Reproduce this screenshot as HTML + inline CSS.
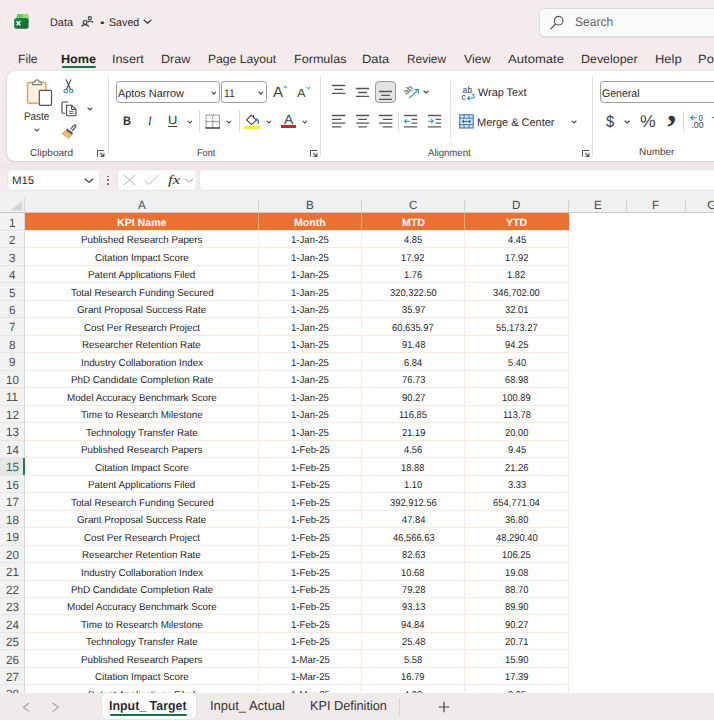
<!DOCTYPE html>
<html lang="en"><head><meta charset="utf-8"><title>Data - Excel</title>
<style>
html,body{margin:0;padding:0;}
body{width:714px;height:720px;overflow:hidden;background:#f4ecec;position:relative;font-family:"Liberation Sans",sans-serif;}
#app{position:absolute;left:0;top:0;width:714px;height:720px;overflow:hidden;background:#f4ecec;}
.b{position:absolute;display:block;}
.t{position:absolute;display:block;white-space:pre;line-height:1;text-rendering:geometricPrecision;transform-origin:0 0;font-family:"Liberation Sans",sans-serif;}
</style></head><body><div id="app">
<svg class="b" style="left:14.00px;top:14.00px;overflow:visible;" width="14.80" height="15.00" viewBox="0 0 14.80 15.00" fill="none">
<defs><linearGradient id="xg" x1="0" y1="0" x2="1" y2="1"><stop offset="0" stop-color="#23904a"/><stop offset="1" stop-color="#14602f"/></linearGradient></defs>
<rect x="2.6" y="0.1" width="12" height="9" rx="2.2" fill="#63c766"/>
<path d="M8.6 0.1 H12.4 a2.2 2.2 0 0 1 2.2 2.2 V5.2 H8.6 Z" fill="#9bdc74"/>
<rect x="0.1" y="3.9" width="14.5" height="10.9" rx="2.3" fill="url(#xg)"/>
<path d="M2.6 7.2 L6.4 11.4 M6.4 7.2 L2.6 11.4" stroke="#fff" stroke-width="1.35"/>
</svg>
<span class="t" style="left:50.34px;top:18px;font-size:11px;color:#2b2b2b;transform:scaleX(0.9877);">Data</span>
<svg class="b" style="left:81.00px;top:16.00px;overflow:visible;" width="12.00" height="11.00" viewBox="0 0 12.00 11.00" fill="none">
<circle cx="4.1" cy="6.3" r="1.9" stroke="#333" stroke-width="1.05"/>
<path d="M0.6 10.7 C1.2 7.9 7 7.9 7.6 10.7" stroke="#333" stroke-width="1.05"/>
<circle cx="8.8" cy="2.2" r="1.6" stroke="#333" stroke-width="1.05"/>
<path d="M7.2 6.6 V5.2 H10.4 C11.2 5.2 11.5 5.9 11.5 6.9" stroke="#333" stroke-width="1.05"/>
</svg>
<span class="t" style="left:100.11px;top:19px;font-size:10px;color:#333;transform:scaleX(1.3091);">•</span>
<span class="t" style="left:109.02px;top:18px;font-size:11px;color:#2b2b2b;transform:scaleX(0.9700);">Saved</span>
<svg class="b" style="left:142.84px;top:19.39px;overflow:visible;" width="9.12" height="5.23" viewBox="0 0 9.12 5.23" fill="none"><path d="M1 1 L4.56 4.23 L8.12 1" stroke="#333" stroke-width="1.1" stroke-linecap="round" stroke-linejoin="round"/></svg>
<div class="b" style="left:538.50px;top:7.60px;width:191.50px;height:29.10px;background:#fbfafa;border:1px solid #e0dada;border-radius:5px;box-sizing:border-box;box-shadow:0 1px 1px rgba(0,0,0,.06);"></div>
<svg class="b" style="left:550.00px;top:14.50px;overflow:visible;" width="14.00" height="14.50" viewBox="0 0 14.00 14.50" fill="none"><circle cx="8.6" cy="5.7" r="4.3" stroke="#555" stroke-width="1.1"/><path d="M5.5 9 L0.8 13.8" stroke="#555" stroke-width="1.2" stroke-linecap="round"/></svg>
<span class="t" style="left:575.10px;top:16px;font-size:12.5px;color:#666;transform:scaleX(0.9626);">Search</span>
<span class="t" style="left:17.99px;top:53px;font-size:12px;color:#333;transform:scaleX(1.0141);">File</span>
<span class="t" style="left:112.11px;top:53px;font-size:12px;color:#333;transform:scaleX(1.0574);">Insert</span>
<span class="t" style="left:161.45px;top:53px;font-size:12px;color:#333;transform:scaleX(1.0507);">Draw</span>
<span class="t" style="left:207.99px;top:53px;font-size:12px;color:#333;transform:scaleX(1.0113);">Page Layout</span>
<span class="t" style="left:293.95px;top:53px;font-size:12px;color:#333;transform:scaleX(1.0488);">Formulas</span>
<span class="t" style="left:361.93px;top:53px;font-size:12px;color:#333;transform:scaleX(1.0722);">Data</span>
<span class="t" style="left:407.01px;top:53px;font-size:12px;color:#333;transform:scaleX(0.9902);">Review</span>
<span class="t" style="left:464.37px;top:53px;font-size:12px;color:#333;transform:scaleX(1.0291);">View</span>
<span class="t" style="left:508.00px;top:53px;font-size:12px;color:#333;transform:scaleX(1.0909);">Automate</span>
<span class="t" style="left:580.96px;top:53px;font-size:12px;color:#333;transform:scaleX(1.0355);">Developer</span>
<span class="t" style="left:654.92px;top:53px;font-size:12px;color:#333;transform:scaleX(1.0811);">Help</span>
<span class="t" style="left:698.22px;top:53px;font-size:12px;color:#333;transform:scaleX(1.0819);">Po</span>
<span class="t" style="left:60.71px;top:53px;font-size:12px;color:#1f1f1f;transform:scaleX(1.0521);font-weight:700;">Home</span>
<div class="b" style="left:61.50px;top:65.60px;width:34.10px;height:2.60px;background:#18724a;border-radius:1.3px;"></div>
<div class="b" style="left:7.00px;top:71.30px;width:733.00px;height:90.00px;background:#ffffff;border-radius:8px;box-shadow:0 1px 3px rgba(90,60,60,.2),0 0 1px rgba(90,60,60,.18);"></div>
<div class="b" style="left:108.00px;top:76.00px;width:1.00px;height:78.00px;background:#e1dfdf;"></div>
<div class="b" style="left:320.40px;top:76.00px;width:1.00px;height:79.70px;background:#e1dfdf;"></div>
<div class="b" style="left:592.40px;top:76.00px;width:1.00px;height:80.50px;background:#e1dfdf;"></div>
<div class="b" style="left:199.30px;top:110.30px;width:1.00px;height:21.70px;background:#dcdcdc;"></div>
<div class="b" style="left:238.80px;top:110.30px;width:1.00px;height:21.70px;background:#dcdcdc;"></div>
<div class="b" style="left:398.20px;top:110.80px;width:1.00px;height:20.40px;background:#dcdcdc;"></div>
<div class="b" style="left:683.30px;top:110.60px;width:1.00px;height:20.80px;background:#dcdcdc;"></div>
<div class="b" style="left:450.20px;top:79.80px;width:1.00px;height:57.80px;background:#e1dfdf;"></div>
<svg class="b" style="left:26.00px;top:79.00px;overflow:visible;" width="27.00" height="28.00" viewBox="0 0 27.00 28.00" fill="none">
<path d="M3.2 3.6 H18.4 a1.6 1.6 0 0 1 1.6 1.6 V22.6 a1.6 1.6 0 0 1 -1.6 1.6 H3.2 a1.6 1.6 0 0 1 -1.6 -1.6 V5.2 a1.6 1.6 0 0 1 1.6 -1.6 Z" fill="#fdf2e4"/>
<path d="M7 3.6 H3.2 a1.6 1.6 0 0 0 -1.6 1.6 V22.6 a1.6 1.6 0 0 0 1.6 1.6 H12.4" stroke="#e9a04a" stroke-width="1.5"/>
<path d="M15 3.6 H18.4 a1.6 1.6 0 0 1 1.6 1.6 V10.4" stroke="#e9a04a" stroke-width="1.5"/>
<path d="M6.6 5.6 V3.9 a1 1 0 0 1 1 -1 H9 a2 2 0 0 1 4 0 H14.4 a1 1 0 0 1 1 1 V5.6 Z" stroke="#777" stroke-width="1.1" fill="#fff"/>
<rect x="13.3" y="11.3" width="12.2" height="15" rx="1" fill="#fff" stroke="#555" stroke-width="1.2"/>
</svg>
<span class="t" style="left:24.41px;top:112px;font-size:11px;color:#333;transform:scaleX(0.9009);">Paste</span>
<svg class="b" style="left:34.04px;top:128.38px;overflow:visible;" width="5.92" height="4.23" viewBox="0 0 5.92 4.23" fill="none"><path d="M1 1 L2.96 3.23 L4.92 1" stroke="#444" stroke-width="1.1" stroke-linecap="round" stroke-linejoin="round"/></svg>
<svg class="b" style="left:63.00px;top:78.50px;overflow:visible;" width="11.00" height="15.00" viewBox="0 0 11.00 15.00" fill="none">
<path d="M3.2 0.8 L7.4 10.2 M7.8 0.8 L3.6 10.2" stroke="#444" stroke-width="1.05" stroke-linecap="round"/>
<circle cx="2.7" cy="12" r="1.7" stroke="#2f7fc1" stroke-width="1.05"/>
<circle cx="8.3" cy="12" r="1.7" stroke="#2f7fc1" stroke-width="1.05"/>
</svg>
<svg class="b" style="left:60.50px;top:100.50px;overflow:visible;" width="16.50" height="15.50" viewBox="0 0 16.50 15.50" fill="none">
<path d="M4.3 12.2 H2 a1 1 0 0 1 -1 -1 V2 a1 1 0 0 1 1 -1 H7.2" stroke="#444" stroke-width="1.1"/>
<path d="M5.6 4.3 H10.8 L14.9 8.2 V13.7 a1 1 0 0 1 -1 1 H6.6 a1 1 0 0 1 -1 -1 Z" stroke="#444" stroke-width="1.1" fill="#fff"/>
<path d="M10.6 4.5 V8.4 H14.7" stroke="#444" stroke-width="1"/>
<path d="M8 10.3 H12.6 M8 12.3 H12.6" stroke="#555" stroke-width=".9"/>
</svg>
<svg class="b" style="left:86.64px;top:106.98px;overflow:visible;" width="5.92" height="3.93" viewBox="0 0 5.92 3.93" fill="none"><path d="M1 1 L2.96 2.93 L4.92 1" stroke="#444" stroke-width="1.1" stroke-linecap="round" stroke-linejoin="round"/></svg>
<svg class="b" style="left:61.00px;top:124.00px;overflow:visible;" width="16.00" height="15.00" viewBox="0 0 16.00 15.00" fill="none">
<path d="M9.4 5.2 L13.2 1.2 a1.1 1.1 0 0 1 1.6 1.5 L11.3 6.9" stroke="#444" stroke-width="1.1" fill="#fff"/>
<path d="M6.2 4.6 L12.2 9 L10.9 10.8 L4.9 6.4 Z" fill="#555"/>
<path d="M4.3 6.9 L10.4 11.4 L7.6 14.3 L1 9.6 Z" fill="#f3bd72" stroke="#e8973a" stroke-width=".9" stroke-linejoin="round"/>
</svg>
<span class="t" style="left:30.30px;top:149px;font-size:10px;color:#444;transform:scaleX(1.0042);">Clipboard</span>
<svg class="b" style="left:97.30px;top:149.50px;overflow:visible;" width="7.70" height="7.20" viewBox="0 0 7.70 7.20" fill="none"><path d="M7.20 0.5 H0.5 V6.70" stroke="#555" stroke-width="1"/><path d="M3 3 L6.90 6.40 M6.90 3.00 V6.40 H3.50" stroke="#555" stroke-width="1.1"/></svg>
<div class="b" style="left:115.70px;top:81.30px;width:104.00px;height:21.70px;background:#fff;border:1px solid #9c9c9c;border-radius:3.5px;box-sizing:border-box;"></div>
<span class="t" style="left:118.40px;top:89px;font-size:11px;color:#2b2b2b;transform:scaleX(0.9873);">Aptos Narrow</span>
<svg class="b" style="left:211.44px;top:90.69px;overflow:visible;" width="5.72" height="4.13" viewBox="0 0 5.72 4.13" fill="none"><path d="M1 1 L2.86 3.13 L4.72 1" stroke="#333" stroke-width="1.1" stroke-linecap="round" stroke-linejoin="round"/></svg>
<div class="b" style="left:221.30px;top:81.30px;width:45.60px;height:21.70px;background:#fff;border:1px solid #9c9c9c;border-radius:3.5px;box-sizing:border-box;"></div>
<span class="t" style="left:223.58px;top:89px;font-size:11px;color:#2b2b2b;transform:scaleX(0.9400);">11</span>
<svg class="b" style="left:258.24px;top:90.69px;overflow:visible;" width="5.72" height="4.13" viewBox="0 0 5.72 4.13" fill="none"><path d="M1 1 L2.86 3.13 L4.72 1" stroke="#333" stroke-width="1.1" stroke-linecap="round" stroke-linejoin="round"/></svg>
<span class="t" style="left:273.00px;top:86px;font-size:14.8px;color:#444;transform:scaleX(1.0256);">A</span>
<svg class="b" style="left:283.00px;top:85.00px;overflow:visible;" width="5.00" height="4.00" viewBox="0 0 5.00 4.00" fill="none"><path d="M0.7 3.2 L2.4 0.9 L4.1 3.2" stroke="#2a8fb5" stroke-width="1"/></svg>
<span class="t" style="left:297.40px;top:88px;font-size:11.8px;color:#444;transform:scaleX(1.0839);">A</span>
<svg class="b" style="left:305.60px;top:85.50px;overflow:visible;" width="5.00" height="4.00" viewBox="0 0 5.00 4.00" fill="none"><path d="M0.7 0.8 L2.4 3.1 L4.1 0.8" stroke="#2a8fb5" stroke-width="1"/></svg>
<span class="t" style="left:122.62px;top:115px;font-size:12.5px;color:#333;transform:scaleX(0.8918);font-weight:700;">B</span>
<span class="t" style="left:147.60px;top:115px;font-size:12.5px;color:#333;transform:scaleX(0.8649);font-style:italic;font-family:'Liberation Serif',serif;">I</span>
<span class="t" style="left:168.06px;top:114px;font-size:12px;color:#333;transform:scaleX(1.0764);">U</span>
<div class="b" style="left:168.40px;top:125.80px;width:8.60px;height:1.10px;background:#444;"></div>
<svg class="b" style="left:187.04px;top:119.59px;overflow:visible;" width="5.72" height="4.03" viewBox="0 0 5.72 4.03" fill="none"><path d="M1 1 L2.86 3.03 L4.72 1" stroke="#444" stroke-width="1.1" stroke-linecap="round" stroke-linejoin="round"/></svg>
<svg class="b" style="left:204.50px;top:113.50px;overflow:visible;" width="15.50" height="15.00" viewBox="0 0 15.50 15.00" fill="none">
<path d="M1 1 H14.5 M1 1 V14 M14.5 1 V14 M7.75 1 V14 M1 7.5 H14.5" stroke="#777" stroke-width="1" stroke-dasharray="1.6 0.7"/>
<path d="M0.5 14 H15" stroke="#333" stroke-width="1.4"/>
</svg>
<svg class="b" style="left:226.04px;top:119.59px;overflow:visible;" width="5.72" height="4.03" viewBox="0 0 5.72 4.03" fill="none"><path d="M1 1 L2.86 3.03 L4.72 1" stroke="#444" stroke-width="1.1" stroke-linecap="round" stroke-linejoin="round"/></svg>
<svg class="b" style="left:243.50px;top:113.50px;overflow:visible;" width="16.50" height="15.50" viewBox="0 0 16.50 15.50" fill="none">
<path d="M7.2 1.2 L12.4 6.2 L7.4 10.6 L2.6 5.8 Z" stroke="#444" stroke-width="1.1" stroke-linejoin="round" fill="#fff"/>
<path d="M9.6 0.9 V4" stroke="#444" stroke-width="1"/>
<path d="M12.4 4.6 C14 5.6 14.6 7.4 14.2 9.6" stroke="#2f7fc1" stroke-width="1.4"/>
<rect x="0.4" y="11.6" width="15.1" height="3.4" fill="#f2ef35"/>
</svg>
<svg class="b" style="left:265.64px;top:119.59px;overflow:visible;" width="5.72" height="4.03" viewBox="0 0 5.72 4.03" fill="none"><path d="M1 1 L2.86 3.03 L4.72 1" stroke="#444" stroke-width="1.1" stroke-linecap="round" stroke-linejoin="round"/></svg>
<span class="t" style="left:284.40px;top:113px;font-size:13.6px;color:#444;transform:scaleX(1.0222);">A</span>
<div class="b" style="left:281.40px;top:125.10px;width:14.60px;height:3.40px;background:#c9242b;"></div>
<svg class="b" style="left:302.44px;top:119.59px;overflow:visible;" width="5.72" height="4.03" viewBox="0 0 5.72 4.03" fill="none"><path d="M1 1 L2.86 3.03 L4.72 1" stroke="#444" stroke-width="1.1" stroke-linecap="round" stroke-linejoin="round"/></svg>
<span class="t" style="left:196.71px;top:149px;font-size:10px;color:#444;transform:scaleX(0.9143);">Font</span>
<svg class="b" style="left:309.60px;top:149.50px;overflow:visible;" width="7.70" height="7.20" viewBox="0 0 7.70 7.20" fill="none"><path d="M7.20 0.5 H0.5 V6.70" stroke="#555" stroke-width="1"/><path d="M3 3 L6.90 6.40 M6.90 3.00 V6.40 H3.50" stroke="#555" stroke-width="1.1"/></svg>
<svg class="b" style="left:332.20px;top:83.80px;overflow:visible;" width="13.30" height="10.80" viewBox="0 0 13.30 10.80" fill="none"><path d="M0.00 1.50 H13.30 M2.20 5.40 H11.10 M0.00 9.30 H13.30 " stroke="#555" stroke-width="1.3"/></svg>
<svg class="b" style="left:355.70px;top:86.50px;overflow:visible;" width="13.10" height="10.90" viewBox="0 0 13.10 10.90" fill="none"><path d="M0.00 1.50 H13.10 M2.20 5.50 H10.90 M0.00 9.40 H13.10 " stroke="#555" stroke-width="1.3"/></svg>
<div class="b" style="left:374.50px;top:81.30px;width:21.70px;height:21.70px;background:#e3e3e3;border:1px solid #9a9a9a;border-radius:4px;box-sizing:border-box;"></div>
<svg class="b" style="left:378.80px;top:89.70px;overflow:visible;" width="13.00" height="10.80" viewBox="0 0 13.00 10.80" fill="none"><path d="M0.00 1.50 H13.00 M2.20 5.40 H10.80 M0.00 9.30 H13.00 " stroke="#555" stroke-width="1.3"/></svg>
<svg class="b" style="left:402.50px;top:83.50px;overflow:visible;" width="16.50" height="16.00" viewBox="0 0 16.50 16.00" fill="none">
<text x="0" y="0" transform="translate(3.5 11.3) rotate(-45)" font-family="Liberation Sans, sans-serif" font-size="8.6" fill="#444">ab</text>
<path d="M6.2 14.4 L15.1 5.8 M11.3 5.6 H15.3 V9.6" stroke="#2a8fb5" stroke-width="1.05"/>
</svg>
<svg class="b" style="left:423.46px;top:90.40px;overflow:visible;" width="6.08" height="3.99" viewBox="0 0 6.08 3.99" fill="none"><path d="M1 1 L3.04 2.99 L5.08 1" stroke="#444" stroke-width="1.15" stroke-linecap="round" stroke-linejoin="round"/></svg>
<svg class="b" style="left:332.20px;top:114.00px;overflow:visible;" width="13.30" height="14.40" viewBox="0 0 13.30 14.40" fill="none"><path d="M0.00 1.50 H13.30 M0.00 5.30 H9.30 M0.00 9.10 H13.30 M0.00 12.90 H9.30 " stroke="#555" stroke-width="1.3"/></svg>
<svg class="b" style="left:355.70px;top:114.00px;overflow:visible;" width="13.10" height="14.40" viewBox="0 0 13.10 14.40" fill="none"><path d="M0.00 1.50 H13.10 M2.20 5.30 H10.90 M0.00 9.10 H13.10 M2.20 12.90 H10.90 " stroke="#555" stroke-width="1.3"/></svg>
<svg class="b" style="left:378.80px;top:114.00px;overflow:visible;" width="13.40" height="14.40" viewBox="0 0 13.40 14.40" fill="none"><path d="M0.00 1.50 H13.40 M4.00 5.30 H13.40 M0.00 9.10 H13.40 M4.00 12.90 H13.40 " stroke="#555" stroke-width="1.3"/></svg>
<svg class="b" style="left:404.30px;top:114.00px;overflow:visible;" width="13.20" height="14.40" viewBox="0 0 13.20 14.40" fill="none"><path d="M0 1.5 H13.20 M0 12.90 H13.20 M7.60 5.30 H13.20 M7.60 9.10 H13.20" stroke="#5c5c5c" stroke-width="1.3"/><path d="M5.6 7.20 H0.6 M2.6 5.20 L0.6 7.20 L2.6 9.20" stroke="#2a8fb5" stroke-width="1.05"/></svg>
<svg class="b" style="left:427.50px;top:114.00px;overflow:visible;" width="13.10" height="14.40" viewBox="0 0 13.10 14.40" fill="none"><path d="M0 1.5 H13.10 M0 12.90 H13.10 M7.50 5.30 H13.10 M7.50 9.10 H13.10" stroke="#5c5c5c" stroke-width="1.3"/><path d="M0.2 7.20 H5.2 M3.2 5.20 L5.2 7.20 L3.2 9.20" stroke="#2a8fb5" stroke-width="1.05"/></svg>
<svg class="b" style="left:461.00px;top:86.00px;overflow:visible;" width="14.50" height="14.00" viewBox="0 0 14.50 14.00" fill="none">
<text x="1.6" y="6.9" font-family="Liberation Sans, sans-serif" font-size="8.8" fill="#444" textLength="9.6" lengthAdjust="spacingAndGlyphs">ab</text>
<text x="0.6" y="13.6" font-family="Liberation Sans, sans-serif" font-size="8.8" fill="#444">c</text>
<path d="M10.6 8.2 C14 8 14.2 12.4 10.8 12.2 H7 M8.8 10.2 L6.6 12.2 L8.8 14.2" stroke="#2a8fb5" stroke-width="1.1"/>
</svg>
<span class="t" style="left:477.80px;top:88px;font-size:11px;color:#2b2b2b;transform:scaleX(0.9857);">Wrap Text</span>
<svg class="b" style="left:459.00px;top:113.60px;overflow:visible;" width="15.00" height="14.80" viewBox="0 0 15.00 14.80" fill="none">
<rect x="0.8" y="0.8" width="13.4" height="13.2" fill="#dbeaf7" stroke="#3a78b5" stroke-width="1.1"/>
<path d="M0.8 4.2 H14.2 M0.8 10.6 H14.2 M5 0.8 V4.2 M10 0.8 V4.2 M5 10.6 V14 M10 10.6 V14" stroke="#3a78b5" stroke-width="1"/>
<path d="M3.2 7.4 H11.8 M5 5.8 L3.2 7.4 L5 9 M10 5.8 L11.8 7.4 L10 9" stroke="#1e5f9f" stroke-width="1"/>
</svg>
<span class="t" style="left:476.93px;top:118px;font-size:11px;color:#2b2b2b;transform:scaleX(0.9984);">Merge &amp; Center</span>
<svg class="b" style="left:571.04px;top:120.19px;overflow:visible;" width="6.12" height="3.83" viewBox="0 0 6.12 3.83" fill="none"><path d="M1 1 L3.06 2.83 L5.12 1" stroke="#444" stroke-width="1.1" stroke-linecap="round" stroke-linejoin="round"/></svg>
<span class="t" style="left:427.60px;top:149px;font-size:10px;color:#444;transform:scaleX(0.9596);">Alignment</span>
<svg class="b" style="left:581.60px;top:149.50px;overflow:visible;" width="7.70" height="7.20" viewBox="0 0 7.70 7.20" fill="none"><path d="M7.20 0.5 H0.5 V6.70" stroke="#555" stroke-width="1"/><path d="M3 3 L6.90 6.40 M6.90 3.00 V6.40 H3.50" stroke="#555" stroke-width="1.1"/></svg>
<div class="b" style="left:600.40px;top:81.30px;width:139.60px;height:21.70px;background:#fff;border:1px solid #9c9c9c;border-radius:3.5px;box-sizing:border-box;"></div>
<span class="t" style="left:601.92px;top:89px;font-size:11px;color:#2b2b2b;transform:scaleX(0.9579);">General</span>
<span class="t" style="left:606.09px;top:114px;font-size:16.5px;color:#444;transform:scaleX(0.8914);">$</span>
<svg class="b" style="left:624.44px;top:119.79px;overflow:visible;" width="6.32" height="4.03" viewBox="0 0 6.32 4.03" fill="none"><path d="M1 1 L3.16 3.03 L5.32 1" stroke="#444" stroke-width="1.1" stroke-linecap="round" stroke-linejoin="round"/></svg>
<span class="t" style="left:639.95px;top:113px;font-size:17px;color:#444;transform:scaleX(1.0378);">%</span>
<span class="t" style="left:667.30px;top:91px;font-size:36px;color:#333;transform:scaleX(1.0000);font-weight:700;font-family:'Liberation Serif',serif;">,</span>
<svg class="b" style="left:689.50px;top:113.80px;overflow:visible;" width="14.50" height="14.60" viewBox="0 0 14.50 14.60" fill="none">
<path d="M6.8 3.8 H0.8 M3.2 1.4 L0.8 3.8 L3.2 6.2" stroke="#2a8fb5" stroke-width="1.1"/>
<text x="8.6" y="7" font-family="Liberation Sans, sans-serif" font-size="8.8" fill="#444" textLength="4.4" lengthAdjust="spacingAndGlyphs">0</text>
<text x="1.4" y="14.4" font-family="Liberation Sans, sans-serif" font-size="8.8" fill="#444" textLength="12.2" lengthAdjust="spacingAndGlyphs">.00</text>
</svg>
<svg class="b" style="left:711.00px;top:113.80px;overflow:visible;" width="5.00" height="14.60" viewBox="0 0 5.00 14.60" fill="none"><path d="M0.8 3.6 H6" stroke="#2a8fb5" stroke-width="1.05"/></svg>
<span class="t" style="left:639.36px;top:148px;font-size:10px;color:#444;transform:scaleX(0.9906);">Number</span>
<div class="b" style="left:0.00px;top:162.00px;width:714.00px;height:7.60px;background:#f0e8e8;"></div>
<div class="b" style="left:7.50px;top:169.60px;width:91.80px;height:20.70px;background:#fff;border-radius:4px;box-shadow:0 0 0 .5px #e3dcdc;"></div>
<span class="t" style="left:11.99px;top:176px;font-size:11px;color:#2b2b2b;transform:scaleX(1.0350);">M15</span>
<svg class="b" style="left:84.44px;top:177.58px;overflow:visible;" width="9.92" height="5.43" viewBox="0 0 9.92 5.43" fill="none"><path d="M1 1 L4.96 4.43 L8.92 1" stroke="#333" stroke-width="1.1" stroke-linecap="round" stroke-linejoin="round"/></svg>
<div class="b" style="left:107.40px;top:175.70px;width:1.80px;height:1.80px;background:#555;border-radius:1px;"></div>
<div class="b" style="left:107.40px;top:179.30px;width:1.80px;height:1.80px;background:#555;border-radius:1px;"></div>
<div class="b" style="left:107.40px;top:182.90px;width:1.80px;height:1.80px;background:#555;border-radius:1px;"></div>
<div class="b" style="left:118.30px;top:169.60px;width:77.30px;height:20.70px;background:#fff;border-radius:4px;box-shadow:0 0 0 .5px #e3dcdc;"></div>
<svg class="b" style="left:123.00px;top:174.00px;overflow:visible;" width="13.00" height="12.00" viewBox="0 0 13.00 12.00" fill="none"><path d="M1 1 L12 11 M12 1 L1 11" stroke="#b9b9b9" stroke-width="1"/></svg>
<svg class="b" style="left:143.50px;top:174.00px;overflow:visible;" width="15.00" height="12.00" viewBox="0 0 15.00 12.00" fill="none"><path d="M0.8 6.6 L4.8 10.6 L14.2 1.2" stroke="#b9b9b9" stroke-width="1"/></svg>
<span class="t" style="left:167.84px;top:173px;font-size:13px;color:#333;transform:scaleX(1.2932);font-style:italic;font-family:'Liberation Serif',serif;">fx</span>
<svg class="b" style="left:184.40px;top:177.75px;overflow:visible;" width="9.80" height="5.10" viewBox="0 0 9.80 5.10" fill="none"><path d="M1 1 L4.90 4.10 L8.80 1" stroke="#999" stroke-width="1" stroke-linecap="round" stroke-linejoin="round"/></svg>
<div class="b" style="left:200.00px;top:169.60px;width:540.00px;height:20.70px;background:#fff;border-radius:4px;box-shadow:0 0 0 .5px #e3dcdc;"></div>
<div class="b" style="left:0.00px;top:190.60px;width:714.00px;height:6.80px;background:#f1efef;"></div>
<div class="b" style="left:0.00px;top:197.40px;width:714.00px;height:495.20px;background:#fff;"></div>
<div class="b" style="left:0.00px;top:197.40px;width:714.00px;height:15.60px;background:#f0f0f0;"></div>
<div class="b" style="left:0.00px;top:212.20px;width:714.00px;height:1.00px;background:#c9c9c9;"></div>
<div class="b" style="left:0.00px;top:213.00px;width:24.80px;height:479.60px;background:#f2f2f2;"></div>
<div class="b" style="left:24.20px;top:197.40px;width:0.80px;height:495.20px;background:#d9d9d9;"></div>
<svg class="b" style="left:9.50px;top:200.00px;overflow:visible;" width="13.00" height="11.00" viewBox="0 0 13.00 11.00" fill="none"><path d="M12.4 0.6 V10.6 H0.6 Z" fill="#d6d6d6"/></svg>
<div class="b" style="left:258.00px;top:199.40px;width:1.00px;height:12.60px;background:#d4d4d4;"></div>
<div class="b" style="left:361.10px;top:199.40px;width:1.00px;height:12.60px;background:#d4d4d4;"></div>
<div class="b" style="left:464.40px;top:199.40px;width:1.00px;height:12.60px;background:#d4d4d4;"></div>
<div class="b" style="left:568.00px;top:199.40px;width:1.00px;height:12.60px;background:#d4d4d4;"></div>
<div class="b" style="left:626.40px;top:199.40px;width:1.00px;height:12.60px;background:#d4d4d4;"></div>
<div class="b" style="left:685.10px;top:199.40px;width:1.00px;height:12.60px;background:#d4d4d4;"></div>
<span class="t" style="left:137.87px;top:199px;font-size:12px;color:#4d4d4d;transform:scaleX(0.9700);">A</span>
<span class="t" style="left:305.99px;top:199px;font-size:12px;color:#4d4d4d;transform:scaleX(0.9700);">B</span>
<span class="t" style="left:409.01px;top:199px;font-size:12px;color:#4d4d4d;transform:scaleX(0.9700);">C</span>
<span class="t" style="left:512.27px;top:199px;font-size:12px;color:#4d4d4d;transform:scaleX(0.9700);">D</span>
<span class="t" style="left:593.58px;top:199px;font-size:12px;color:#4d4d4d;transform:scaleX(0.9700);">E</span>
<span class="t" style="left:652.43px;top:199px;font-size:12px;color:#4d4d4d;transform:scaleX(0.9700);">F</span>
<span class="t" style="left:706.59px;top:199px;font-size:12px;color:#4d4d4d;transform:scaleX(1.1429);">G</span>
<div class="b" style="left:25.00px;top:213.00px;width:543.50px;height:17.48px;background:#e97132;"></div>
<div class="b" style="left:258.00px;top:213.00px;width:1.00px;height:17.48px;background:#f2a77c;"></div>
<div class="b" style="left:361.10px;top:213.00px;width:1.00px;height:17.48px;background:#f2a77c;"></div>
<div class="b" style="left:464.40px;top:213.00px;width:1.00px;height:17.48px;background:#f2a77c;"></div>
<span class="t" style="left:116.82px;top:218px;font-size:10.5px;color:#fff;transform:scaleX(1.0100);font-weight:700;">KPI Name</span>
<span class="t" style="left:294.08px;top:218px;font-size:10.5px;color:#fff;transform:scaleX(1.0100);font-weight:700;">Month</span>
<span class="t" style="left:401.63px;top:218px;font-size:10.5px;color:#fff;transform:scaleX(1.0100);font-weight:700;">MTD</span>
<span class="t" style="left:506.22px;top:218px;font-size:10.5px;color:#fff;transform:scaleX(1.0100);font-weight:700;">YTD</span>
<div class="b" style="left:25.00px;top:229.98px;width:543.50px;height:1.00px;background:#fceadf;"></div>
<div class="b" style="left:25.00px;top:247.45px;width:543.50px;height:1.00px;background:#fceadf;"></div>
<div class="b" style="left:25.00px;top:264.93px;width:543.50px;height:1.00px;background:#fceadf;"></div>
<div class="b" style="left:25.00px;top:282.40px;width:543.50px;height:1.00px;background:#fceadf;"></div>
<div class="b" style="left:25.00px;top:299.88px;width:543.50px;height:1.00px;background:#fceadf;"></div>
<div class="b" style="left:25.00px;top:317.36px;width:543.50px;height:1.00px;background:#fceadf;"></div>
<div class="b" style="left:25.00px;top:334.83px;width:543.50px;height:1.00px;background:#fceadf;"></div>
<div class="b" style="left:25.00px;top:352.31px;width:543.50px;height:1.00px;background:#fceadf;"></div>
<div class="b" style="left:25.00px;top:369.78px;width:543.50px;height:1.00px;background:#fceadf;"></div>
<div class="b" style="left:25.00px;top:387.26px;width:543.50px;height:1.00px;background:#fceadf;"></div>
<div class="b" style="left:25.00px;top:404.74px;width:543.50px;height:1.00px;background:#fceadf;"></div>
<div class="b" style="left:25.00px;top:422.21px;width:543.50px;height:1.00px;background:#fceadf;"></div>
<div class="b" style="left:25.00px;top:439.69px;width:543.50px;height:1.00px;background:#fceadf;"></div>
<div class="b" style="left:25.00px;top:457.16px;width:543.50px;height:1.00px;background:#fceadf;"></div>
<div class="b" style="left:25.00px;top:474.64px;width:543.50px;height:1.00px;background:#fceadf;"></div>
<div class="b" style="left:25.00px;top:492.12px;width:543.50px;height:1.00px;background:#fceadf;"></div>
<div class="b" style="left:25.00px;top:509.59px;width:543.50px;height:1.00px;background:#fceadf;"></div>
<div class="b" style="left:25.00px;top:527.07px;width:543.50px;height:1.00px;background:#fceadf;"></div>
<div class="b" style="left:25.00px;top:544.54px;width:543.50px;height:1.00px;background:#fceadf;"></div>
<div class="b" style="left:25.00px;top:562.02px;width:543.50px;height:1.00px;background:#fceadf;"></div>
<div class="b" style="left:25.00px;top:579.50px;width:543.50px;height:1.00px;background:#fceadf;"></div>
<div class="b" style="left:25.00px;top:596.97px;width:543.50px;height:1.00px;background:#fceadf;"></div>
<div class="b" style="left:25.00px;top:614.45px;width:543.50px;height:1.00px;background:#fceadf;"></div>
<div class="b" style="left:25.00px;top:631.92px;width:543.50px;height:1.00px;background:#fceadf;"></div>
<div class="b" style="left:25.00px;top:649.40px;width:543.50px;height:1.00px;background:#fceadf;"></div>
<div class="b" style="left:25.00px;top:666.88px;width:543.50px;height:1.00px;background:#fceadf;"></div>
<div class="b" style="left:25.00px;top:684.35px;width:543.50px;height:1.00px;background:#fceadf;"></div>
<div class="b" style="left:258.00px;top:230.48px;width:1.00px;height:462.12px;background:#fceadf;"></div>
<div class="b" style="left:361.10px;top:230.48px;width:1.00px;height:462.12px;background:#fceadf;"></div>
<div class="b" style="left:464.40px;top:230.48px;width:1.00px;height:462.12px;background:#fceadf;"></div>
<div class="b" style="left:568.00px;top:230.48px;width:1.00px;height:462.12px;background:#fceadf;"></div>
<span class="t" style="left:8.91px;top:217px;font-size:12px;color:#4d4d4d;transform:scaleX(0.9700);">1</span>
<div class="b" style="left:0.00px;top:229.98px;width:24.40px;height:1.00px;background:#e6e6e6;"></div>
<span class="t" style="left:9.03px;top:234px;font-size:12px;color:#4d4d4d;transform:scaleX(0.9700);">2</span>
<div class="b" style="left:0.00px;top:247.45px;width:24.40px;height:1.00px;background:#e6e6e6;"></div>
<span class="t" style="left:9.09px;top:252px;font-size:12px;color:#4d4d4d;transform:scaleX(0.9700);">3</span>
<div class="b" style="left:0.00px;top:264.93px;width:24.40px;height:1.00px;background:#e6e6e6;"></div>
<span class="t" style="left:9.09px;top:269px;font-size:12px;color:#4d4d4d;transform:scaleX(0.9700);">4</span>
<div class="b" style="left:0.00px;top:282.40px;width:24.40px;height:1.00px;background:#e6e6e6;"></div>
<span class="t" style="left:9.09px;top:287px;font-size:12px;color:#4d4d4d;transform:scaleX(0.9700);">5</span>
<div class="b" style="left:0.00px;top:299.88px;width:24.40px;height:1.00px;background:#e6e6e6;"></div>
<span class="t" style="left:9.03px;top:304px;font-size:12px;color:#4d4d4d;transform:scaleX(0.9700);">6</span>
<div class="b" style="left:0.00px;top:317.36px;width:24.40px;height:1.00px;background:#e6e6e6;"></div>
<span class="t" style="left:9.03px;top:321px;font-size:12px;color:#4d4d4d;transform:scaleX(0.9700);">7</span>
<div class="b" style="left:0.00px;top:334.83px;width:24.40px;height:1.00px;background:#e6e6e6;"></div>
<span class="t" style="left:9.09px;top:339px;font-size:12px;color:#4d4d4d;transform:scaleX(0.9700);">8</span>
<div class="b" style="left:0.00px;top:352.31px;width:24.40px;height:1.00px;background:#e6e6e6;"></div>
<span class="t" style="left:9.09px;top:356px;font-size:12px;color:#4d4d4d;transform:scaleX(0.9700);">9</span>
<div class="b" style="left:0.00px;top:369.78px;width:24.40px;height:1.00px;background:#e6e6e6;"></div>
<span class="t" style="left:5.63px;top:374px;font-size:12px;color:#4d4d4d;transform:scaleX(0.9700);">10</span>
<div class="b" style="left:0.00px;top:387.26px;width:24.40px;height:1.00px;background:#e6e6e6;"></div>
<span class="t" style="left:6.12px;top:391px;font-size:12px;color:#4d4d4d;transform:scaleX(0.9700);">11</span>
<div class="b" style="left:0.00px;top:404.74px;width:24.40px;height:1.00px;background:#e6e6e6;"></div>
<span class="t" style="left:5.69px;top:409px;font-size:12px;color:#4d4d4d;transform:scaleX(0.9700);">12</span>
<div class="b" style="left:0.00px;top:422.21px;width:24.40px;height:1.00px;background:#e6e6e6;"></div>
<span class="t" style="left:5.69px;top:426px;font-size:12px;color:#4d4d4d;transform:scaleX(0.9700);">13</span>
<div class="b" style="left:0.00px;top:439.69px;width:24.40px;height:1.00px;background:#e6e6e6;"></div>
<span class="t" style="left:5.57px;top:444px;font-size:12px;color:#4d4d4d;transform:scaleX(0.9700);">14</span>
<div class="b" style="left:0.00px;top:457.16px;width:24.40px;height:1.00px;background:#e6e6e6;"></div>
<div class="b" style="left:0.00px;top:458.16px;width:23.20px;height:16.48px;background:#e6e6e6;"></div>
<span class="t" style="left:5.69px;top:461px;font-size:12px;color:#1e6b41;transform:scaleX(0.9700);">15</span>
<div class="b" style="left:0.00px;top:474.64px;width:24.40px;height:1.00px;background:#e6e6e6;"></div>
<span class="t" style="left:5.69px;top:479px;font-size:12px;color:#4d4d4d;transform:scaleX(0.9700);">16</span>
<div class="b" style="left:0.00px;top:492.12px;width:24.40px;height:1.00px;background:#e6e6e6;"></div>
<span class="t" style="left:5.69px;top:496px;font-size:12px;color:#4d4d4d;transform:scaleX(0.9700);">17</span>
<div class="b" style="left:0.00px;top:509.59px;width:24.40px;height:1.00px;background:#e6e6e6;"></div>
<span class="t" style="left:5.69px;top:514px;font-size:12px;color:#4d4d4d;transform:scaleX(0.9700);">18</span>
<div class="b" style="left:0.00px;top:527.07px;width:24.40px;height:1.00px;background:#e6e6e6;"></div>
<span class="t" style="left:5.69px;top:531px;font-size:12px;color:#4d4d4d;transform:scaleX(0.9700);">19</span>
<div class="b" style="left:0.00px;top:544.54px;width:24.40px;height:1.00px;background:#e6e6e6;"></div>
<span class="t" style="left:5.75px;top:549px;font-size:12px;color:#4d4d4d;transform:scaleX(0.9700);">20</span>
<div class="b" style="left:0.00px;top:562.02px;width:24.40px;height:1.00px;background:#e6e6e6;"></div>
<span class="t" style="left:5.81px;top:566px;font-size:12px;color:#4d4d4d;transform:scaleX(0.9700);">21</span>
<div class="b" style="left:0.00px;top:579.50px;width:24.40px;height:1.00px;background:#e6e6e6;"></div>
<span class="t" style="left:5.81px;top:584px;font-size:12px;color:#4d4d4d;transform:scaleX(0.9700);">22</span>
<div class="b" style="left:0.00px;top:596.97px;width:24.40px;height:1.00px;background:#e6e6e6;"></div>
<span class="t" style="left:5.81px;top:601px;font-size:12px;color:#4d4d4d;transform:scaleX(0.9700);">23</span>
<div class="b" style="left:0.00px;top:614.45px;width:24.40px;height:1.00px;background:#e6e6e6;"></div>
<span class="t" style="left:5.69px;top:619px;font-size:12px;color:#4d4d4d;transform:scaleX(0.9700);">24</span>
<div class="b" style="left:0.00px;top:631.92px;width:24.40px;height:1.00px;background:#e6e6e6;"></div>
<span class="t" style="left:5.81px;top:636px;font-size:12px;color:#4d4d4d;transform:scaleX(0.9700);">25</span>
<div class="b" style="left:0.00px;top:649.40px;width:24.40px;height:1.00px;background:#e6e6e6;"></div>
<span class="t" style="left:5.81px;top:654px;font-size:12px;color:#4d4d4d;transform:scaleX(0.9700);">26</span>
<div class="b" style="left:0.00px;top:666.88px;width:24.40px;height:1.00px;background:#e6e6e6;"></div>
<span class="t" style="left:5.81px;top:671px;font-size:12px;color:#4d4d4d;transform:scaleX(0.9700);">27</span>
<div class="b" style="left:0.00px;top:684.35px;width:24.40px;height:1.00px;background:#e6e6e6;"></div>
<span class="t" style="left:5.81px;top:688px;font-size:12px;color:#4d4d4d;transform:scaleX(0.9700);">28</span>
<div class="b" style="left:23.00px;top:457.66px;width:1.80px;height:17.48px;background:#1e7e4b;"></div>
<span class="t" style="left:81.01px;top:236px;font-size:10px;color:#1f1f1f;transform:scaleX(0.9800);">Published Research Papers</span>
<span class="t" style="left:291.37px;top:236px;font-size:10px;color:#1f1f1f;transform:scaleX(0.9600);">1-Jan-25</span>
<span class="t" style="left:404.25px;top:236px;font-size:10px;color:#1f1f1f;transform:scaleX(0.9350);">4.85</span>
<span class="t" style="left:507.70px;top:236px;font-size:10px;color:#1f1f1f;transform:scaleX(0.9350);">4.45</span>
<span class="t" style="left:95.09px;top:254px;font-size:10px;color:#1f1f1f;transform:scaleX(0.9800);">Citation Impact Score</span>
<span class="t" style="left:291.37px;top:254px;font-size:10px;color:#1f1f1f;transform:scaleX(0.9600);">1-Jan-25</span>
<span class="t" style="left:401.39px;top:254px;font-size:10px;color:#1f1f1f;transform:scaleX(0.9350);">17.92</span>
<span class="t" style="left:504.84px;top:254px;font-size:10px;color:#1f1f1f;transform:scaleX(0.9350);">17.92</span>
<span class="t" style="left:88.23px;top:271px;font-size:10px;color:#1f1f1f;transform:scaleX(0.9800);">Patent Applications Filed</span>
<span class="t" style="left:291.37px;top:271px;font-size:10px;color:#1f1f1f;transform:scaleX(0.9600);">1-Jan-25</span>
<span class="t" style="left:404.02px;top:271px;font-size:10px;color:#1f1f1f;transform:scaleX(0.9350);">1.76</span>
<span class="t" style="left:507.47px;top:271px;font-size:10px;color:#1f1f1f;transform:scaleX(0.9350);">1.82</span>
<span class="t" style="left:70.78px;top:289px;font-size:10px;color:#1f1f1f;transform:scaleX(0.9800);">Total Research Funding Secured</span>
<span class="t" style="left:291.37px;top:289px;font-size:10px;color:#1f1f1f;transform:scaleX(0.9600);">1-Jan-25</span>
<span class="t" style="left:389.88px;top:289px;font-size:10px;color:#1f1f1f;transform:scaleX(0.9350);">320,322.50</span>
<span class="t" style="left:493.33px;top:289px;font-size:10px;color:#1f1f1f;transform:scaleX(0.9350);">346,702.00</span>
<span class="t" style="left:77.39px;top:306px;font-size:10px;color:#1f1f1f;transform:scaleX(0.9800);">Grant Proposal Success Rate</span>
<span class="t" style="left:291.37px;top:306px;font-size:10px;color:#1f1f1f;transform:scaleX(0.9600);">1-Jan-25</span>
<span class="t" style="left:401.56px;top:306px;font-size:10px;color:#1f1f1f;transform:scaleX(0.9350);">35.97</span>
<span class="t" style="left:505.01px;top:306px;font-size:10px;color:#1f1f1f;transform:scaleX(0.9350);">32.01</span>
<span class="t" style="left:83.70px;top:324px;font-size:10px;color:#1f1f1f;transform:scaleX(0.9800);">Cost Per Research Project</span>
<span class="t" style="left:291.37px;top:324px;font-size:10px;color:#1f1f1f;transform:scaleX(0.9600);">1-Jan-25</span>
<span class="t" style="left:392.45px;top:324px;font-size:10px;color:#1f1f1f;transform:scaleX(0.9350);">60,635.97</span>
<span class="t" style="left:495.95px;top:324px;font-size:10px;color:#1f1f1f;transform:scaleX(0.9350);">55,173.27</span>
<span class="t" style="left:82.41px;top:341px;font-size:10px;color:#1f1f1f;transform:scaleX(0.9800);">Researcher Retention Rate</span>
<span class="t" style="left:291.37px;top:341px;font-size:10px;color:#1f1f1f;transform:scaleX(0.9600);">1-Jan-25</span>
<span class="t" style="left:401.50px;top:341px;font-size:10px;color:#1f1f1f;transform:scaleX(0.9350);">91.48</span>
<span class="t" style="left:504.95px;top:341px;font-size:10px;color:#1f1f1f;transform:scaleX(0.9350);">94.25</span>
<span class="t" style="left:80.58px;top:359px;font-size:10px;color:#1f1f1f;transform:scaleX(0.9800);">Industry Collaboration Index</span>
<span class="t" style="left:291.37px;top:359px;font-size:10px;color:#1f1f1f;transform:scaleX(0.9600);">1-Jan-25</span>
<span class="t" style="left:404.08px;top:359px;font-size:10px;color:#1f1f1f;transform:scaleX(0.9350);">6.84</span>
<span class="t" style="left:507.64px;top:359px;font-size:10px;color:#1f1f1f;transform:scaleX(0.9350);">5.40</span>
<span class="t" style="left:70.72px;top:376px;font-size:10px;color:#1f1f1f;transform:scaleX(0.9800);">PhD Candidate Completion Rate</span>
<span class="t" style="left:291.37px;top:376px;font-size:10px;color:#1f1f1f;transform:scaleX(0.9600);">1-Jan-25</span>
<span class="t" style="left:401.50px;top:376px;font-size:10px;color:#1f1f1f;transform:scaleX(0.9350);">76.73</span>
<span class="t" style="left:504.95px;top:376px;font-size:10px;color:#1f1f1f;transform:scaleX(0.9350);">68.98</span>
<span class="t" style="left:66.92px;top:394px;font-size:10px;color:#1f1f1f;transform:scaleX(0.9800);">Model Accuracy Benchmark Score</span>
<span class="t" style="left:291.37px;top:394px;font-size:10px;color:#1f1f1f;transform:scaleX(0.9600);">1-Jan-25</span>
<span class="t" style="left:401.50px;top:394px;font-size:10px;color:#1f1f1f;transform:scaleX(0.9350);">90.27</span>
<span class="t" style="left:502.27px;top:394px;font-size:10px;color:#1f1f1f;transform:scaleX(0.9350);">100.89</span>
<span class="t" style="left:81.19px;top:411px;font-size:10px;color:#1f1f1f;transform:scaleX(0.9800);">Time to Research Milestone</span>
<span class="t" style="left:291.37px;top:411px;font-size:10px;color:#1f1f1f;transform:scaleX(0.9600);">1-Jan-25</span>
<span class="t" style="left:399.17px;top:411px;font-size:10px;color:#1f1f1f;transform:scaleX(0.9350);">116.85</span>
<span class="t" style="left:502.62px;top:411px;font-size:10px;color:#1f1f1f;transform:scaleX(0.9350);">113.78</span>
<span class="t" style="left:86.21px;top:429px;font-size:10px;color:#1f1f1f;transform:scaleX(0.9800);">Technology Transfer Rate</span>
<span class="t" style="left:291.37px;top:429px;font-size:10px;color:#1f1f1f;transform:scaleX(0.9600);">1-Jan-25</span>
<span class="t" style="left:401.50px;top:429px;font-size:10px;color:#1f1f1f;transform:scaleX(0.9350);">21.19</span>
<span class="t" style="left:504.95px;top:429px;font-size:10px;color:#1f1f1f;transform:scaleX(0.9350);">20.00</span>
<span class="t" style="left:81.01px;top:446px;font-size:10px;color:#1f1f1f;transform:scaleX(0.9800);">Published Research Papers</span>
<span class="t" style="left:290.83px;top:446px;font-size:10px;color:#1f1f1f;transform:scaleX(0.9600);">1-Feb-25</span>
<span class="t" style="left:404.25px;top:446px;font-size:10px;color:#1f1f1f;transform:scaleX(0.9350);">4.56</span>
<span class="t" style="left:507.58px;top:446px;font-size:10px;color:#1f1f1f;transform:scaleX(0.9350);">9.45</span>
<span class="t" style="left:95.09px;top:464px;font-size:10px;color:#1f1f1f;transform:scaleX(0.9800);">Citation Impact Score</span>
<span class="t" style="left:290.83px;top:464px;font-size:10px;color:#1f1f1f;transform:scaleX(0.9600);">1-Feb-25</span>
<span class="t" style="left:401.39px;top:464px;font-size:10px;color:#1f1f1f;transform:scaleX(0.9350);">18.88</span>
<span class="t" style="left:504.95px;top:464px;font-size:10px;color:#1f1f1f;transform:scaleX(0.9350);">21.26</span>
<span class="t" style="left:88.23px;top:481px;font-size:10px;color:#1f1f1f;transform:scaleX(0.9800);">Patent Applications Filed</span>
<span class="t" style="left:290.83px;top:481px;font-size:10px;color:#1f1f1f;transform:scaleX(0.9600);">1-Feb-25</span>
<span class="t" style="left:404.02px;top:481px;font-size:10px;color:#1f1f1f;transform:scaleX(0.9350);">1.10</span>
<span class="t" style="left:507.64px;top:481px;font-size:10px;color:#1f1f1f;transform:scaleX(0.9350);">3.33</span>
<span class="t" style="left:70.78px;top:499px;font-size:10px;color:#1f1f1f;transform:scaleX(0.9800);">Total Research Funding Secured</span>
<span class="t" style="left:290.83px;top:499px;font-size:10px;color:#1f1f1f;transform:scaleX(0.9600);">1-Feb-25</span>
<span class="t" style="left:389.88px;top:499px;font-size:10px;color:#1f1f1f;transform:scaleX(0.9350);">392,912.56</span>
<span class="t" style="left:493.21px;top:499px;font-size:10px;color:#1f1f1f;transform:scaleX(0.9350);">654,771.04</span>
<span class="t" style="left:77.39px;top:516px;font-size:10px;color:#1f1f1f;transform:scaleX(0.9800);">Grant Proposal Success Rate</span>
<span class="t" style="left:290.83px;top:516px;font-size:10px;color:#1f1f1f;transform:scaleX(0.9600);">1-Feb-25</span>
<span class="t" style="left:401.56px;top:516px;font-size:10px;color:#1f1f1f;transform:scaleX(0.9350);">47.84</span>
<span class="t" style="left:505.01px;top:516px;font-size:10px;color:#1f1f1f;transform:scaleX(0.9350);">36.80</span>
<span class="t" style="left:83.70px;top:534px;font-size:10px;color:#1f1f1f;transform:scaleX(0.9800);">Cost Per Research Project</span>
<span class="t" style="left:290.83px;top:534px;font-size:10px;color:#1f1f1f;transform:scaleX(0.9600);">1-Feb-25</span>
<span class="t" style="left:392.56px;top:534px;font-size:10px;color:#1f1f1f;transform:scaleX(0.9350);">46,566.63</span>
<span class="t" style="left:496.01px;top:534px;font-size:10px;color:#1f1f1f;transform:scaleX(0.9350);">48,290.40</span>
<span class="t" style="left:82.41px;top:551px;font-size:10px;color:#1f1f1f;transform:scaleX(0.9800);">Researcher Retention Rate</span>
<span class="t" style="left:290.83px;top:551px;font-size:10px;color:#1f1f1f;transform:scaleX(0.9600);">1-Feb-25</span>
<span class="t" style="left:401.56px;top:551px;font-size:10px;color:#1f1f1f;transform:scaleX(0.9350);">82.63</span>
<span class="t" style="left:502.27px;top:551px;font-size:10px;color:#1f1f1f;transform:scaleX(0.9350);">106.25</span>
<span class="t" style="left:80.58px;top:569px;font-size:10px;color:#1f1f1f;transform:scaleX(0.9800);">Industry Collaboration Index</span>
<span class="t" style="left:290.83px;top:569px;font-size:10px;color:#1f1f1f;transform:scaleX(0.9600);">1-Feb-25</span>
<span class="t" style="left:401.39px;top:569px;font-size:10px;color:#1f1f1f;transform:scaleX(0.9350);">10.68</span>
<span class="t" style="left:504.84px;top:569px;font-size:10px;color:#1f1f1f;transform:scaleX(0.9350);">19.08</span>
<span class="t" style="left:70.72px;top:586px;font-size:10px;color:#1f1f1f;transform:scaleX(0.9800);">PhD Candidate Completion Rate</span>
<span class="t" style="left:290.83px;top:586px;font-size:10px;color:#1f1f1f;transform:scaleX(0.9600);">1-Feb-25</span>
<span class="t" style="left:401.50px;top:586px;font-size:10px;color:#1f1f1f;transform:scaleX(0.9350);">79.28</span>
<span class="t" style="left:505.01px;top:586px;font-size:10px;color:#1f1f1f;transform:scaleX(0.9350);">88.70</span>
<span class="t" style="left:66.92px;top:603px;font-size:10px;color:#1f1f1f;transform:scaleX(0.9800);">Model Accuracy Benchmark Score</span>
<span class="t" style="left:290.83px;top:603px;font-size:10px;color:#1f1f1f;transform:scaleX(0.9600);">1-Feb-25</span>
<span class="t" style="left:401.50px;top:603px;font-size:10px;color:#1f1f1f;transform:scaleX(0.9350);">93.13</span>
<span class="t" style="left:505.01px;top:603px;font-size:10px;color:#1f1f1f;transform:scaleX(0.9350);">89.90</span>
<span class="t" style="left:81.19px;top:621px;font-size:10px;color:#1f1f1f;transform:scaleX(0.9800);">Time to Research Milestone</span>
<span class="t" style="left:290.83px;top:621px;font-size:10px;color:#1f1f1f;transform:scaleX(0.9600);">1-Feb-25</span>
<span class="t" style="left:401.45px;top:621px;font-size:10px;color:#1f1f1f;transform:scaleX(0.9350);">94.84</span>
<span class="t" style="left:504.95px;top:621px;font-size:10px;color:#1f1f1f;transform:scaleX(0.9350);">90.27</span>
<span class="t" style="left:86.21px;top:638px;font-size:10px;color:#1f1f1f;transform:scaleX(0.9800);">Technology Transfer Rate</span>
<span class="t" style="left:290.83px;top:638px;font-size:10px;color:#1f1f1f;transform:scaleX(0.9600);">1-Feb-25</span>
<span class="t" style="left:401.50px;top:638px;font-size:10px;color:#1f1f1f;transform:scaleX(0.9350);">25.48</span>
<span class="t" style="left:504.95px;top:638px;font-size:10px;color:#1f1f1f;transform:scaleX(0.9350);">20.71</span>
<span class="t" style="left:81.01px;top:656px;font-size:10px;color:#1f1f1f;transform:scaleX(0.9800);">Published Research Papers</span>
<span class="t" style="left:290.83px;top:656px;font-size:10px;color:#1f1f1f;transform:scaleX(0.9600);">1-Mar-25</span>
<span class="t" style="left:404.19px;top:656px;font-size:10px;color:#1f1f1f;transform:scaleX(0.9350);">5.58</span>
<span class="t" style="left:504.84px;top:656px;font-size:10px;color:#1f1f1f;transform:scaleX(0.9350);">15.90</span>
<span class="t" style="left:95.09px;top:673px;font-size:10px;color:#1f1f1f;transform:scaleX(0.9800);">Citation Impact Score</span>
<span class="t" style="left:290.83px;top:673px;font-size:10px;color:#1f1f1f;transform:scaleX(0.9600);">1-Mar-25</span>
<span class="t" style="left:401.39px;top:673px;font-size:10px;color:#1f1f1f;transform:scaleX(0.9350);">16.79</span>
<span class="t" style="left:504.84px;top:673px;font-size:10px;color:#1f1f1f;transform:scaleX(0.9350);">17.39</span>
<span class="t" style="left:88.23px;top:691px;font-size:10px;color:#1f1f1f;transform:scaleX(0.9800);">Patent Applications Filed</span>
<span class="t" style="left:290.83px;top:691px;font-size:10px;color:#1f1f1f;transform:scaleX(0.9600);">1-Mar-25</span>
<span class="t" style="left:404.25px;top:691px;font-size:10px;color:#1f1f1f;transform:scaleX(0.9350);">4.00</span>
<span class="t" style="left:507.64px;top:691px;font-size:10px;color:#1f1f1f;transform:scaleX(0.9350);">8.05</span>
<div class="b" style="left:0.00px;top:692.90px;width:714.00px;height:27.10px;background:#f1eaeb;"></div>
<div class="b" style="left:101.80px;top:693.20px;width:94.20px;height:26.20px;background:#fff;border-radius:5px;box-shadow:0 0 2px rgba(0,0,0,.13);"></div>
<svg class="b" style="left:22.00px;top:701.50px;overflow:visible;" width="9.00" height="11.00" viewBox="0 0 9.00 11.00" fill="none"><path d="M7.2 1 L1.4 5.3 L7.2 9.6" stroke="#a8a3a3" stroke-width="1.1"/></svg>
<svg class="b" style="left:51.00px;top:701.50px;overflow:visible;" width="9.00" height="11.00" viewBox="0 0 9.00 11.00" fill="none"><path d="M1.6 1 L7.4 5.3 L1.6 9.6" stroke="#a8a3a3" stroke-width="1.1"/></svg>
<span class="t" style="left:109.17px;top:699px;font-size:13px;color:#2e2e2e;transform:scaleX(0.9533);font-weight:700;">Input_ Target</span>
<div class="b" style="left:110.00px;top:714.20px;width:76.60px;height:2.20px;background:#18724a;border-radius:1px;"></div>
<span class="t" style="left:210.08px;top:699px;font-size:13px;color:#333;transform:scaleX(0.9969);">Input_ Actual</span>
<span class="t" style="left:310.02px;top:699px;font-size:13px;color:#333;transform:scaleX(0.9756);">KPI Definition</span>
<div class="b" style="left:399.20px;top:697.50px;width:1.00px;height:17.50px;background:#d8d2d2;"></div>
<svg class="b" style="left:437.50px;top:701.00px;overflow:visible;" width="12.00" height="12.00" viewBox="0 0 12.00 12.00" fill="none"><path d="M6 0.8 V11.2 M0.8 6 H11.2" stroke="#444" stroke-width="1.2"/></svg>
</div></body></html>
